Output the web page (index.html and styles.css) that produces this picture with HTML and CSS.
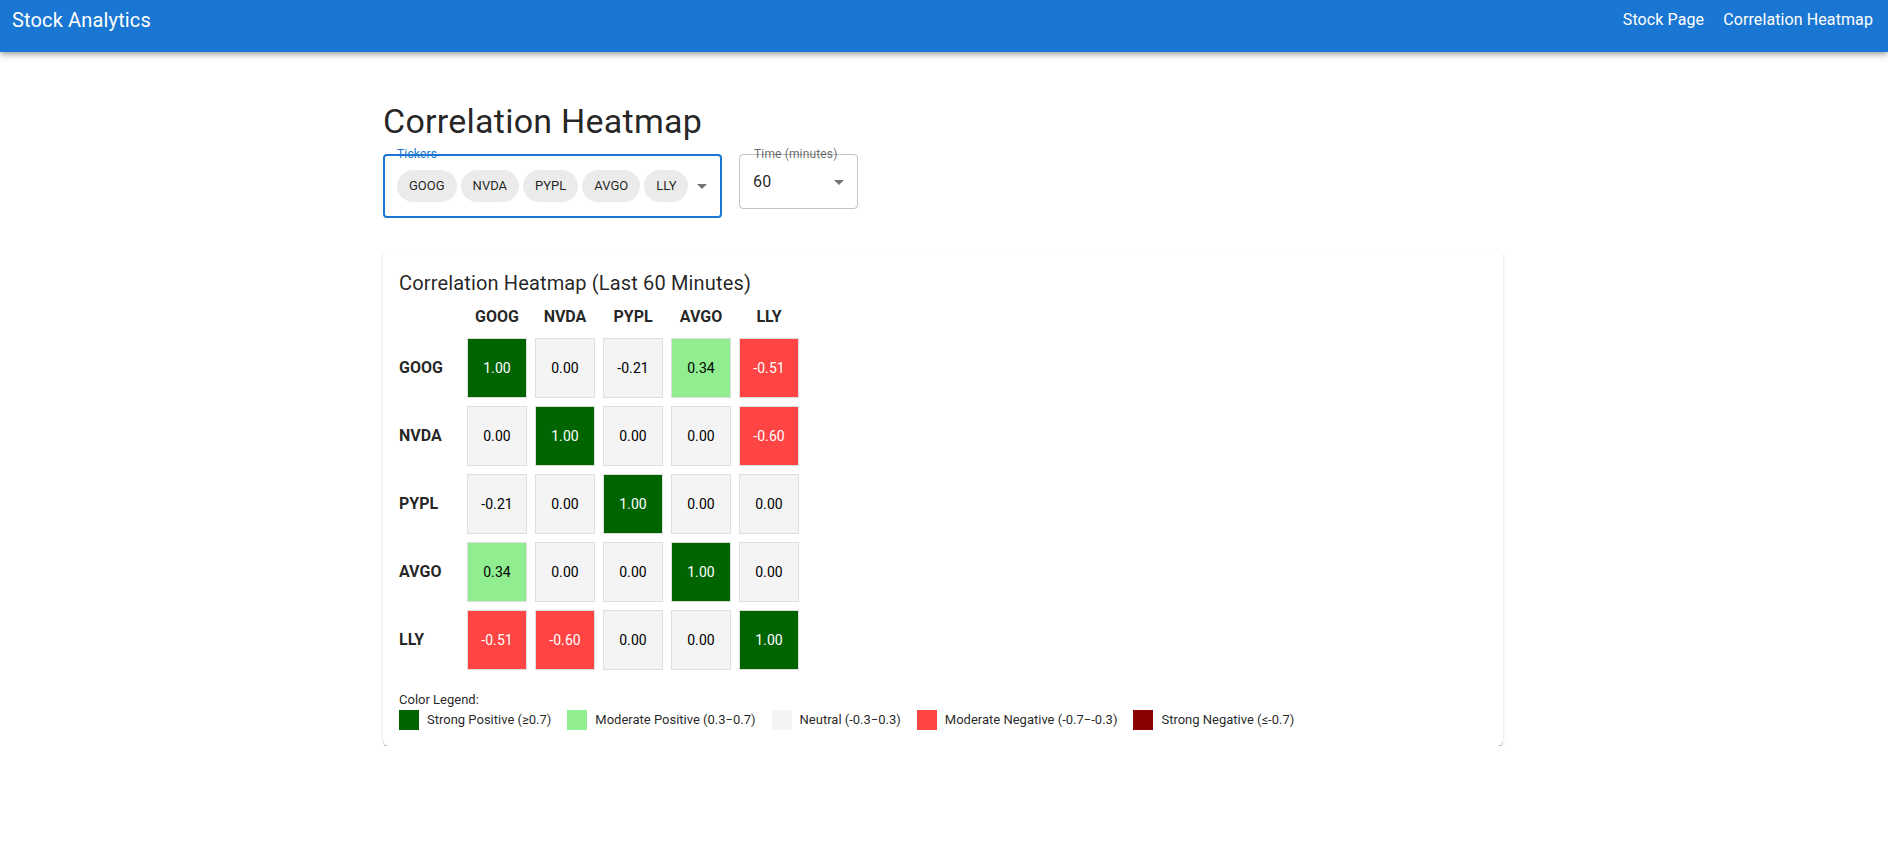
FILE: index.html
```html
<!DOCTYPE html>
<html lang="en">
<head>
<meta charset="utf-8">
<title>Stock Analytics</title>
<link rel="stylesheet" href="styles.css">
</head>
<body>
<header class="appbar">
  <div class="toolbar">
    <div class="brand">Stock Analytics</div>
    <nav class="nav">
      <a class="nav-link" href="#">Stock Page</a>
      <a class="nav-link" href="#">Correlation Heatmap</a>
    </nav>
  </div>
</header>

<main class="container">
  <h1 class="page-title">Correlation Heatmap</h1>

  <div class="controls">
    <div class="field field-tickers">
      <span class="field-label label-focused">Tickers</span>
      <div class="chips">
        <span class="chip">GOOG</span>
        <span class="chip">NVDA</span>
        <span class="chip">PYPL</span>
        <span class="chip">AVGO</span>
        <span class="chip">LLY</span>
      </div>
      <svg class="arrow" viewBox="0 0 24 24" width="24" height="24"><path d="M7 10l5 5 5-5z"/></svg>
    </div>
    <div class="field field-time">
      <span class="field-label">Time (minutes)</span>
      <span class="value">60</span>
      <svg class="arrow" viewBox="0 0 24 24" width="24" height="24"><path d="M7 10l5 5 5-5z"/></svg>
    </div>
  </div>

  <section class="card">
    <h2 class="card-title">Correlation Heatmap (Last 60 Minutes)</h2>
    <div class="heatmap">
      <div class="corner"></div>
      <div class="col-head">GOOG</div>
      <div class="col-head">NVDA</div>
      <div class="col-head">PYPL</div>
      <div class="col-head">AVGO</div>
      <div class="col-head">LLY</div>

      <div class="row-head">GOOG</div>
      <div class="cell strong-pos">1.00</div>
      <div class="cell neutral">0.00</div>
      <div class="cell neutral">-0.21</div>
      <div class="cell mod-pos">0.34</div>
      <div class="cell mod-neg">-0.51</div>

      <div class="row-head">NVDA</div>
      <div class="cell neutral">0.00</div>
      <div class="cell strong-pos">1.00</div>
      <div class="cell neutral">0.00</div>
      <div class="cell neutral">0.00</div>
      <div class="cell mod-neg">-0.60</div>

      <div class="row-head">PYPL</div>
      <div class="cell neutral">-0.21</div>
      <div class="cell neutral">0.00</div>
      <div class="cell strong-pos">1.00</div>
      <div class="cell neutral">0.00</div>
      <div class="cell neutral">0.00</div>

      <div class="row-head">AVGO</div>
      <div class="cell mod-pos">0.34</div>
      <div class="cell neutral">0.00</div>
      <div class="cell neutral">0.00</div>
      <div class="cell strong-pos">1.00</div>
      <div class="cell neutral">0.00</div>

      <div class="row-head">LLY</div>
      <div class="cell mod-neg">-0.51</div>
      <div class="cell mod-neg">-0.60</div>
      <div class="cell neutral">0.00</div>
      <div class="cell neutral">0.00</div>
      <div class="cell strong-pos">1.00</div>
    </div>

    <div class="legend">
      <div class="legend-title">Color Legend:</div>
      <div class="legend-items">
        <div class="legend-item"><span class="swatch sw-strong-pos"></span><span>Strong Positive (≥0.7)</span></div>
        <div class="legend-item"><span class="swatch sw-mod-pos"></span><span>Moderate Positive (0.3−0.7)</span></div>
        <div class="legend-item"><span class="swatch sw-neutral"></span><span>Neutral (-0.3−0.3)</span></div>
        <div class="legend-item"><span class="swatch sw-mod-neg"></span><span>Moderate Negative (-0.7−-0.3)</span></div>
        <div class="legend-item"><span class="swatch sw-strong-neg"></span><span>Strong Negative (≤-0.7)</span></div>
      </div>
    </div>
  </section>
</main>
</body>
</html>
```

FILE: styles.css
```css
* { box-sizing: border-box; }

html, body {
  margin: 0;
  padding: 0;
  background: #ffffff;
  font-family: Roboto, "Liberation Sans", Arial, sans-serif;
  color: rgba(0, 0, 0, 0.87);
}

.appbar {
  height: 52px;
  background: #1976d2;
  color: #ffffff;
  padding: 0 15px 12px 12px;
  box-shadow: 0px 2px 4px -1px rgba(0,0,0,0.2), 0px 4px 5px 0px rgba(0,0,0,0.14), 0px 1px 10px 0px rgba(0,0,0,0.12);
  position: relative;
  z-index: 2;
}

.toolbar {
  height: 40px;
  display: flex;
  align-items: center;
  justify-content: space-between;
}

.brand {
  font-size: 20px;
  font-weight: 400;
  line-height: 32px;
  letter-spacing: 0.15px;
}

.nav {
  display: flex;
  gap: 19px;
}

.nav-link {
  color: #ffffff;
  text-decoration: none;
  font-size: 16px;
  line-height: 24px;
  letter-spacing: 0.1px;
}

.container {
  width: 1122px;
  margin: 0 auto;
  padding: 48px 2px 0 0;
}

.page-title {
  margin: 0;
  font-size: 34px;
  font-weight: 400;
  line-height: 42px;
  letter-spacing: 0.25px;
}

.controls {
  display: flex;
  align-items: flex-start;
  gap: 17px;
  margin-top: 12px;
}

.field {
  position: relative;
  display: flex;
  align-items: center;
  border-radius: 4px;
}

.field-label {
  position: absolute;
  top: -8px;
  font-size: 12px;
  line-height: 14px;
  letter-spacing: 0.15px;
  color: rgba(0, 0, 0, 0.6);
  white-space: nowrap;
}

.label-focused { color: #1976d2; }

.field-tickers {
  width: 339px;
  height: 64px;
  border: 2px solid #1976d2;
  padding: 0 6px 0 12px;
}

.field-tickers .field-label { left: 12px; top: -9px; }

.chips {
  display: flex;
  gap: 4px;
}

.chip {
  height: 32px;
  line-height: 32px;
  padding: 0 12px;
  border-radius: 16px;
  background: rgba(0, 0, 0, 0.08);
  font-size: 13px;
  color: rgba(0, 0, 0, 0.87);
}

.arrow {
  margin-left: auto;
  fill: rgba(0, 0, 0, 0.54);
  flex: none;
}

.field-time {
  width: 119px;
  height: 55px;
  border: 1px solid rgba(0, 0, 0, 0.23);
  padding: 0 6px 0 13px;
}

.field-time .field-label { left: 14px; }

.value {
  font-size: 16px;
  line-height: 23px;
  letter-spacing: 0.15px;
}

.card {
  margin-top: 33px;
  background: #ffffff;
  border-radius: 6px;
  padding: 16px;
  box-shadow: 0px 2px 1px -1px rgba(0,0,0,0.22), 0px 1px 1px 0px rgba(0,0,0,0.15), 0px 1px 3px 0px rgba(0,0,0,0.12);
}

.card-title {
  margin: 0 0 6px 0;
  font-size: 20px;
  font-weight: 400;
  line-height: 32px;
  letter-spacing: 0.15px;
}

.heatmap {
  display: grid;
  grid-template-columns: repeat(6, 60px);
  grid-template-rows: 25px repeat(5, 60px);
  gap: 8px;
}

.col-head {
  font-size: 16px;
  font-weight: 700;
  line-height: 24px;
  text-align: center;
  align-self: start;
}

.row-head {
  font-size: 16px;
  font-weight: 700;
  line-height: 24px;
  align-self: center;
}

.cell {
  display: flex;
  align-items: center;
  justify-content: center;
  border: 1px solid #dddddd;
  font-size: 14px;
  letter-spacing: 0.1px;
}

.strong-pos { background: #006400; color: #ffffff; }
.mod-pos { background: #90ee90; color: #000000; }
.neutral { background: #f4f4f4; color: #000000; }
.mod-neg { background: #ff4444; color: #ffffff; }

.legend { margin-top: 20px; }

.legend-title {
  font-size: 13px;
  line-height: 20px;
}

.legend-items {
  display: flex;
  gap: 16px;
}

.legend-item {
  display: flex;
  align-items: center;
  gap: 8px;
  font-size: 13px;
  line-height: 20px;
}

.swatch {
  width: 20px;
  height: 20px;
  display: block;
}

.sw-strong-pos { background: #006400; }
.sw-mod-pos { background: #90ee90; }
.sw-neutral { background: #f4f4f4; }
.sw-mod-neg { background: #ff4444; }
.sw-strong-neg { background: #8b0000; }
```
